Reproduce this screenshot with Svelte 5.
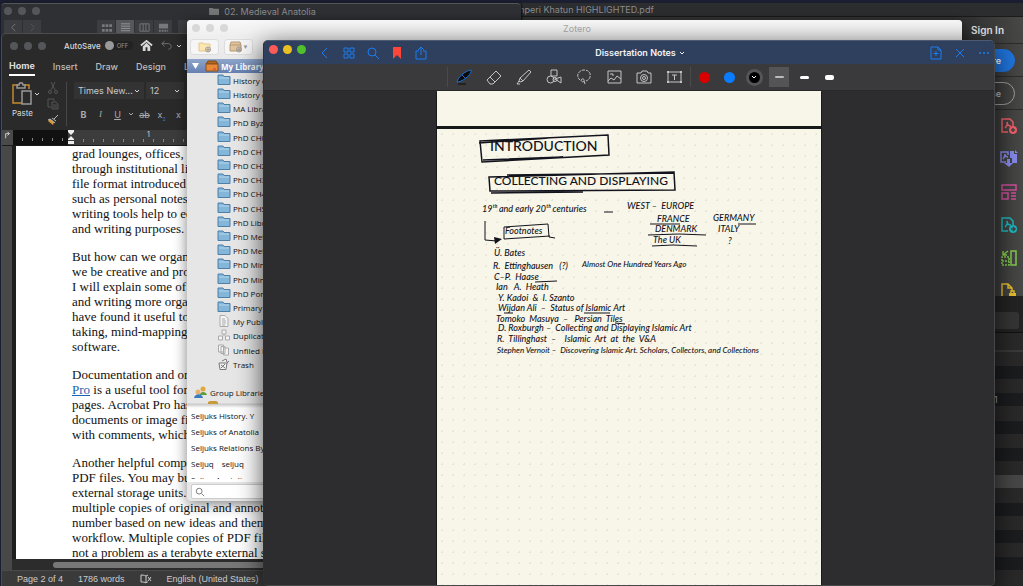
<script>
  const collections = [
    'History of Islamic Art', 'History of Seljuks', 'MA Library', 'PhD Byzantium',
    'PhD CH0', 'PhD CH1', 'PhD CH2', 'PhD CH3', 'PhD CH4', 'PhD CH5',
    'PhD Library', 'PhD Methods', 'PhD Metalwork', 'PhD Mina', 'PhD Mina', 'PhD Portraits', 'Primary Sources',
  ];

  const special = [
    { label: 'My Publications', icon: 'page' },
    { label: 'Duplicate Items', icon: 'boxes' },
    { label: 'Unfiled Items', icon: 'pages' },
    { label: 'Trash', icon: 'trash' },
  ];

  const tags = ['Seljuks History. Y', 'Seljuks of Anatolia', 'Seljuks Relations By'];

  const paragraphs = [
    ['grad lounges, offices, a', 'through institutional li', 'file format introduced', 'such as personal notes', 'writing tools help to ed', 'and writing purposes.'],
    ['But how can we organ', 'we be creative and pro', 'I will explain some of', 'and writing more orga', 'have found it useful to', 'taking, mind-mapping', 'software.'],
  ];

  const lastParagraphs = [
    ['Another helpful comp', 'PDF files. You may bu', 'external storage units.', 'multiple copies of original and annota', 'number based on new ideas and them', 'workflow. Multiple copies of PDF fil', 'not a problem as a terabyte external s'],
  ];

  const tools = ['pen', 'eraser', 'highlighter', 'shapes', 'lasso', 'image', 'camera', 'text'];

  // positions on the notebook page
  const notes = [
    { x: 53, y: 8, size: 'h1', text: 'INTRODUCTION' },
    { x: 57, y: 44, size: 'h2', text: 'COLLECTING AND DISPLAYING' },
    { x: 45, y: 75, size: 'md', text: '19ᵗʰ and early 20ᵗʰ centuries' },
    { x: 190, y: 72, size: 'md', text: 'WEST –  EUROPE' },
    { x: 220, y: 85, size: 'md', text: 'FRANCE' },
    { x: 276, y: 84, size: 'md', text: 'GERMANY' },
    { x: 218, y: 95, size: 'md', text: 'DENMARK' },
    { x: 281, y: 95, size: 'md', text: 'ITALY' },
    { x: 216, y: 106, size: 'md', text: 'The UK' },
    { x: 291, y: 107, size: 'md', text: '?' },
    { x: 68, y: 97, size: 'md', text: 'Footnotes' },
    { x: 57, y: 119, size: 'md', text: 'Ü. Bates' },
    { x: 56, y: 132, size: 'md', text: 'R.  Ettinghausen   (?)' },
    { x: 145, y: 130, size: 'sm', text: 'Almost One Hundred Years Ago' },
    { x: 57, y: 143, size: 'md', text: 'C–P.  Haase' },
    { x: 59, y: 153, size: 'md', text: 'Ian   A.  Heath' },
    { x: 61, y: 164, size: 'md', text: 'Y. Kadoi  &  I. Szanto' },
    { x: 61, y: 174, size: 'md', text: 'Wijdan Ali  –  Status of Islamic Art' },
    { x: 59, y: 185, size: 'md', text: 'Tomoko  Masuya  –   Persian  Tiles' },
    { x: 61, y: 194, size: 'md', text: 'D. Roxburgh –  Collecting and Displaying Islamic Art' },
    { x: 60, y: 205, size: 'md', text: 'R.  Tillinghast  –    Islamic  Art  at  the  V&A' },
    { x: 60, y: 216, size: 'sm', text: 'Stephen Vernoit –  Discovering Islamic Art. Scholars, Collectors, and Collections' },
  ];

  const fileRows = Array.from({ length: 17 }, (_, i) => i);
</script>

{#snippet chevron()}
  <svg class="chev" viewBox="0 0 8 8"><path d="M2 3l2 2 2-2" /></svg>
{/snippet}

<div class="desktop">
  <section class="acrobat">
    <header class="acro-title">Mahperi Khatun HIGHLIGHTED.pdf</header>
    <div class="acro-side">
      <a href="#signin" class="signin">Sign In</a>
      <div class="acro-cell"><button class="pill blue">Share</button></div>
      <div class="acro-cell"><button class="pill">Close</button></div>
      <nav class="acro-tools">
        <button aria-label="Create PDF" class="red">
          <svg viewBox="0 0 18 18"><path d="M8 15H2V2h8l3 3v4M5 11c2-2 3-4 2-6 0 3 2 4 4 4" /><circle cx="13" cy="13" r="4" class="solid" /><path class="cut" d="M13 11v4M11 13h4" /></svg>
        </button>
        <button aria-label="Combine files" class="violet">
          <svg viewBox="0 0 18 18"><path d="M6 12H1V2h7v3M3 9c2-2 2-3 2-5 0 2 1 3 3 3" /><path class="solid" d="M10 1h4v3h3v9h-5V8h-2zM15 0l3 3h-3zM7 9h3v4h3l-4 4-5-4h3z" /></svg>
        </button>
        <button aria-label="Organize pages" class="pink">
          <svg viewBox="0 0 18 18"><path d="M2 2h14v5H2zM2 10h6v6H2zM11 10h5M11 13h5M11 16h5" /></svg>
        </button>
        <button aria-label="Export PDF" class="teal">
          <svg viewBox="0 0 18 18"><path d="M8 15H2V2h8l3 3v4M5 11c2-2 3-4 2-6 0 3 2 4 4 4" /><circle cx="13" cy="13" r="4" class="solid" /><path class="cut" d="M11 13h4M13 11l2 2-2 2" /></svg>
        </button>
        <button aria-label="Edit pages" class="green">
          <svg viewBox="0 0 18 18"><path d="M11 2h5v14h-5z" /><path stroke-dasharray="2 1" d="M9 8H2v8h7V8M2 12h7" /><path d="M8 2L3 6M3 2v4h4" /></svg>
        </button>
        <button aria-label="Protect" class="yellow">
          <svg viewBox="0 0 18 18"><path d="M8 15H2V2h6l4 4v3M8 2v4h4" /><path class="solid" d="M9 11h7v6H9z" /><path d="M11 11V9h3v2" /></svg>
        </button>
      </nav>
    </div>
  </section>

  <section class="files">
    <div class="files-bar"><input type="search" aria-label="Search files" /></div>
    <div class="files-head"></div>
    <ul>
      {#each fileRows as row}
        <li class:selected={row === 9}>{row === 3 ? '1' : ''}</li>
      {/each}
    </ul>
  </section>

  <section class="finder">
    <header class="finder-title">
      <div class="lights"><i></i><i></i><i></i></div>
      <div class="finder-name">
        <svg viewBox="0 0 12 10"><path d="M0 1h4l1 1h6v7H0z" /></svg>
        02. Medieval Anatolia
      </div>
    </header>
    <div class="finder-tools">
      <div class="seg">
        <button aria-label="Back"><svg viewBox="0 0 12 12"><path d="M8 2L4 6l4 4" /></svg></button>
        <button aria-label="Forward" class="dim"><svg viewBox="0 0 12 12"><path d="M4 2l4 4-4 4" /></svg></button>
      </div>
      <div class="seg views">
        <button aria-label="Icons"><svg viewBox="0 0 12 12"><path stroke-width="3" stroke-dasharray="3 1" d="M1 4h11M1 9h11" /></svg></button>
        <button aria-label="List" class="on"><svg viewBox="0 0 12 12"><path d="M1 2h10M1 4.5h10M1 7h10M1 9.5h10" /></svg></button>
        <button aria-label="Columns"><svg viewBox="0 0 12 12"><path d="M1 2h10v8H1zM4.500 2v8M7.500 2v8" /></svg></button>
        <button aria-label="Gallery"><svg viewBox="0 0 12 12"><path stroke-width="5" d="M1 4.500h10" /><path stroke-width="2" stroke-dasharray="2 1" d="M1 9.500h10" /></svg></button>
      </div>
      <div class="seg views"><button aria-label="Group"></button></div>
    </div>
  </section>

  <section class="word">
    <header class="word-title">
      <div class="lights"><i></i><i></i><i></i></div>
      <label class="autosave">AutoSave <input type="checkbox" /><span class="toggle"><b></b>OFF</span></label>
      <button aria-label="Home page"><svg class="i14" viewBox="0 0 14 14"><path class="thick" d="M1 7l6-5 6 5" /><path class="fill" d="M3 8l4-4 4 4v5H8V9H6v4H3z" /></svg></button>
      <button aria-label="Undo" class="undo"><svg class="i14" viewBox="0 0 14 14"><path d="M5 2L2 5l3 3M2 5h7c4 0 4 6 0 6" /></svg></button>
      {@render chevron()}
    </header>
    <nav class="tabs">
      <button class="active">Home</button>
      <button>Insert</button>
      <button>Draw</button>
      <button>Design</button>
      <button>L</button>
    </nav>
    <div class="ribbon">
      <button class="paste">
        <span>
          <svg viewBox="0 0 20 24"><path class="board" d="M6 3H1v18h9M12 3h5v4" /><path class="clip" d="M5 6V3h2c0-3 4-3 4 0h2v3zM10 9h9v13h-9z" /></svg>
          {@render chevron()}
        </span>
        Paste
      </button>
      <div class="mini">
        <button aria-label="Cut"><svg class="dim" viewBox="0 0 12 12"><path d="M4 0l4 8M8 0L4 8" /><circle cx="3" cy="10" r="1.500" /><circle cx="9" cy="10" r="1.500" /></svg></button>
        <button aria-label="Copy"><svg class="dim" viewBox="0 0 12 12"><path d="M4 9H1V1h6v2M5 4h4l2 2v5H5zM6 7h4M6 9h4" /></svg></button>
        <button aria-label="Format painter"><svg viewBox="0 0 12 12"><path class="gold" d="M1 7l5 4 1-3-4-3z" /><path d="M3 5l5 4M5 4l4 3M7 5l4-4M1 6l2-1" /></svg></button>
      </div>
      <div class="fonts">
        <div class="row">
          <label class="select wide"><select aria-label="Font"><option>Times New...</option></select>{@render chevron()}</label>
          <label class="select"><select aria-label="Font size"><option>12</option></select>{@render chevron()}</label>
        </div>
        <div class="row styles">
          <button><b>B</b></button>
          <button class="ital"><i>I</i></button>
          <button><u>U</u></button>
          {@render chevron()}
          <button><s>ab</s></button>
          <button>x<sub>2</sub></button>
          <button>x</button>
        </div>
      </div>
    </div>
    <div class="ruler">
      <span class="tabstop"><svg viewBox="0 0 12 12"><path d="M4 9V4h4M6 2l2 2-2 2" /></svg></span>
      <span class="margin"></span>
      <svg class="marker" viewBox="0 0 6 14"><path d="M0 0h6v2L3 5 0 2zM3 6l3 3v1H0V9zM0 11h6v3H0z" /></svg>
      <span class="scale">1</span>
    </div>
    <div class="doc">
      <article>
        {#each paragraphs as lines}
          <p>{#each lines as line}{line}<br />{/each}</p>
        {/each}
        <p>
          Documentation and or<br /><a href="#pro">Pro</a> is a useful tool for<br />pages. Acrobat Pro has<br />documents or image fi<br />with comments, which
        </p>
        {#each lastParagraphs as lines}
          <p>{#each lines as line}{line}<br />{/each}</p>
        {/each}
      </article>
    </div>
    <div class="hscroll"><span></span></div>
    <footer class="status">
      <span>Page 2 of 4</span>
      <span>1786 words</span>
      <svg viewBox="0 0 12 10"><path d="M6 2v7M6 2C4 1 2 1 1 1v7c2 0 4 0 5 1 1-1 1-1 2-1M6 2l2-1M8 3l3 4M11 3L8 7" /></svg>
      <span>English (United States)</span>
    </footer>
  </section>

  <section class="zotero">
    <header class="zot-title">
      <div class="lights"><i></i><i></i><i></i></div>
      <span class="zot-name">Zotero</span>
    </header>
    <div class="zot-tools">
      <button aria-label="New collection"><svg viewBox="0 0 14 12"><path class="cream" d="M1 2h4l1 1h6v7H1z" /><circle cx="10" cy="8.500" r="2.500" /><path d="M10 7v3M8.500 8.500h3" /></svg></button>
      <button aria-label="New library"><svg viewBox="0 0 14 12"><path class="tan" d="M2 1h9l1 3v6H1V4zM1 4h11" /><circle cx="10" cy="8.500" r="2.500" /><path d="M10 7v3M8.500 8.500h3" /></svg><small>▼</small></button>
    </div>
    <ul class="tree">
      <li class="root">
        <svg class="twist" viewBox="0 0 14 12"><path d="M3 3h7l-3.500 6z" /></svg>
        <svg viewBox="0 0 14 12"><path class="lid" d="M3 1h8l2 3H1z" /><path class="crate" d="M1 4h12v7H1z" /><path class="dots" d="M8 9h3" /></svg>
        My Library
      </li>
      {#each collections as name}
        <li>
          <svg viewBox="0 0 14 12"><path class="folder" d="M1 2.500V1h5l1 1.500h6v8H1z" /><path class="shine" d="M2 4h10" /></svg>
          {name}
        </li>
      {/each}
      {#each special as item}
        <li>
          <svg viewBox="0 0 14 12" class="gray">
            {#if item.icon === 'page'}
              <path d="M3 .5h5l3 3v8H3zM5 4h3M5 6h4M5 8h4M5 10h3" />
            {:else if item.icon === 'boxes'}
              <path d="M5 1h4v4H5zM1.500 7h4v4h-4zM8.500 7h4v4h-4zM7 5v2" />
            {:else if item.icon === 'pages'}
              <path d="M1.500 1h5v7h-5zM4 2.500h4v7H4zM6.500 4h5v7h-5z" />
            {:else}
              <path class="dark" d="M2 5h8l-1 6.500H3zM5 3l4-2 1 3M4 7l4 3M8 6l-4 4M10 5l2-2" />
            {/if}
          </svg>
          {item.label}
        </li>
      {/each}
      <li></li>
      <li class="group">
        <svg viewBox="0 0 14 12" class="people"><circle cx="9" cy="3" r="2.500" fill="#e0a83c" /><path d="M6 9c0-4 6-4 7 0z" fill="#5a9c3c" /><circle cx="4" cy="6" r="2.500" fill="#e9b070" /><path d="M0 12c1-5 8-5 9 0z" fill="#3a7ac0" /></svg>
        Group Libraries
      </li>
    </ul>
    <div class="splitter"><svg viewBox="0 0 14 4"><path d="M2 4V2l2-1h6l2 1v2z" /></svg></div>
    <ul class="tags">
      {#each tags as tag}
        <li>{tag}</li>
      {/each}
      <li><span>Seljuq</span><span>seljuq</span></li>
      <li class="cut-off">Seljuq Anatolia</li>
    </ul>
    <label class="zot-search">
      <svg viewBox="0 0 12 12"><circle cx="5" cy="5" r="3.500" /><path d="M8 8l3 3" /></svg>
      <input type="text" aria-label="Filter tags" />
    </label>
  </section>

  <section class="notes">
    <header class="notes-title">
      <div class="bar-left">
        <div class="lights color"><i></i><i></i><i></i></div>
        <button aria-label="Back"><svg viewBox="0 0 16 16"><path d="M10 3L5 8l5 5" /></svg></button>
        <button aria-label="Thumbnails"><svg viewBox="0 0 16 16"><path d="M3 3h4v4H3zM9 3h4v4H9zM3 9h4v4H3zM9 9h4v4H9z" /></svg></button>
        <button aria-label="Search"><svg viewBox="0 0 16 16"><circle cx="7" cy="7" r="4" /><path d="M10 10l4 4" /></svg></button>
        <button aria-label="Bookmark"><svg viewBox="0 0 16 16"><path class="mark" d="M4 2h8v12l-4-4-4 4z" /></svg></button>
        <button aria-label="Share"><svg viewBox="0 0 16 16"><path d="M6 6H3v8h10V6h-3M8 10V2M5 5l3-3 3 3" /></svg></button>
      </div>
      <h1>Dissertation Notes {@render chevron()}</h1>
      <div class="bar-right">
        <button aria-label="Add page"><svg viewBox="0 0 16 16"><path d="M3 2h7l3 3v9H3zM10 2v3h3M8 6v5M5.500 8.500h5" /></svg></button>
        <button aria-label="Close"><svg viewBox="0 0 16 16"><path d="M4 4l8 8M12 4l-8 8" /></svg></button>
        <button aria-label="More"><svg viewBox="0 0 16 16"><path class="dots3" d="M4 8h0M8 8h0M12 8h0" /></svg></button>
      </div>
    </header>
    <div class="notes-tools">
      <span class="rule"></span>
      {#each tools as tool}
        <button class="tool" aria-label={tool}>
          <svg viewBox="0 0 16 16">
            {#if tool === 'pen'}
              <path class="ink" d="M1 13C2 8 9 2 15 1c1 3-5 10-13 12z" /><path class="nib" d="M4 11l8-8M2 15h8" /><path class="ring" d="M6 6l3 3" />
            {:else if tool === 'eraser'}
              <path d="M1 11l9-9 5 5-8 8H4zM4 8l5 5" />
            {:else if tool === 'highlighter'}
              <path d="M4 9l9-8 2 2-8 9zM4 9l-1 3 1 1 3-1M3 12l-2 3h3" />
            {:else if tool === 'shapes'}
              <path d="M5 1h6v6H5zM9 10l6-2v6z" /><circle cx="4.500" cy="10.500" r="3.500" /><circle cx="9" cy="10.500" r="2" />
            {:else if tool === 'lasso'}
              <path stroke-dasharray="3 1" d="M4 11C-1 7 3 1 8 1c8 0 8 9 2 11" /><path d="M5 11c1-2 4-1 3 1s-3 0-3-1M8 12l1 3" />
            {:else if tool === 'image'}
              <path d="M2 2h13v12H2zM2 12l3-3 3 2 3-4 4 3M4 5h3v2" />
            {:else if tool === 'camera'}
              <path d="M1 4h4l1-2h5l1 2h3v10H1z" /><circle cx="8" cy="9" r="3.500" /><circle cx="8" cy="9" r="1.500" />
            {:else}
              <path d="M2 3h13v10H2zM6 6h5M8.500 6v5" /><path class="knobs" d="M2 3h0M15 3h0M2 13h0M15 13h0" />
            {/if}
          </svg>
        </button>
      {/each}
      <span class="rule"></span>
      <button class="swatch" aria-label="Red"><i class="c-red"></i></button>
      <button class="swatch" aria-label="Blue"><i class="c-blue"></i></button>
      <button class="swatch" aria-label="Black"><i class="c-black">{@render chevron()}</i></button>
      <button class="swatch on" aria-label="Thin"><i class="line thin"></i></button>
      <button class="swatch" aria-label="Medium"><i class="line"></i></button>
      <button class="swatch" aria-label="Thick"><i class="line fat"></i></button>
    </div>
    <div class="canvas">
      <div class="sheet prev"></div>
      <div class="sheet">
        {#each notes as note}
          <span class="note {note.size}" style="left: {note.x}px; top: {note.y}px">{note.text}</span>
        {/each}
        <svg class="strokes" viewBox="0 0 384 457">
          <path class="heavy" d="M43 12L171 6l1 20L45 33zM42 14l70-5M46 31l80-3" />
          <path class="heavy" d="M52 48l185-5 1 18-185 1zM54 64l92-1M70 46l167-2" />
          <path d="M67 98l44-3 1 13 6 1M67 98v12l46-3" />
          <path d="M48 92v19l12 1M167 83h9" />
          <path class="fill" d="M57 108l8 2-7 5z" />
          <path d="M213 95h30M211 106l31-1 27 1M215 117l21-1 24 1M301 95h18M98 153l22-1M67 184h9M147 184h26M178 194l10 1" />
        </svg>
      </div>
    </div>
  </section>
</div>

<style>
  :global(body) { margin: 0; background: #1a1c2c; }
  .desktop {
    position: relative; height: 100vh; overflow: hidden;
    background: #1b1e30; color: #d8d8d8;
    font-family: Inter, "Liberation Sans", sans-serif; font-size: 9px;
  }
  section { position: absolute; box-sizing: border-box; overflow: hidden; display: flex; flex-direction: column; }
  button { border: 0; padding: 0; margin: 0; background: none; color: inherit; font: inherit; }
  ul { list-style: none; margin: 0; padding: 0; }
  svg { display: block; fill: none; stroke: currentColor; stroke-width: 1; }
  .chev { width: 8px; height: 8px; flex-shrink: 0; }
  .lights { display: flex; gap: 6px; }
  .lights i { width: 8px; height: 8px; border-radius: 50%; background: #55565a; }

  /* acrobat */
  .acrobat { left: 4px; right: 0; top: 3px; bottom: 0; background: #3e3e3e; }
  .acro-title {
    height: 13px; line-height: 13px; padding-left: 502px; background: #2c2d2f;
    color: #8b8c8e; border-bottom: 1px solid #1b1b1b; white-space: nowrap;
  }
  .acro-side { flex: 1; display: flex; flex-direction: column; background: linear-gradient(90deg, #333 95%, #484847); }
  .signin {
    height: 26px; line-height: 26px; padding-right: 19px; text-align: right; font-size: 10px; font-weight: 600;
    color: #e4e4e4; text-decoration: none; border-bottom: 1px solid #2c2c2c;
  }
  .acro-cell { height: 32px; display: flex; align-items: center; justify-content: flex-end; padding-right: 8px; border-bottom: 1px solid #2c2c2c; }
  .pill { height: 23px; width: 64px; padding-right: 13px; text-align: right; border: 1px solid #a0a0a0; border-radius: 12px; color: #bbb; font-weight: 600; box-sizing: border-box; }
  .pill.blue { background: #1f74dc; border-color: #1f74dc; color: #fff; }
  .acro-tools { display: flex; flex-direction: column; align-items: flex-end; gap: 15px; padding: 7px 5px 0 0; }
  .acro-tools button, .acro-tools svg { width: 18px; height: 18px; }
  .acro-tools svg { stroke-width: 1.500; }
  .solid { fill: currentColor; stroke: none; }
  .cut { stroke: #444; }
  .red { color: #ee5f68; } .violet { color: #8688ea; } .pink { color: #cf4f9c; }
  .teal { color: #1fb5bd; } .green { color: #82cc4c; } .yellow { color: #e5bd2c; }

  /* file list behind the notes window */
  .files { right: 0; top: 296px; bottom: 0; width: 240px; background: #292929; }
  .files-bar { height: 37px; padding: 16px 4px 0; box-sizing: border-box; background: #232324; border-bottom: 1px solid #111; }
  .files-bar input { width: 100%; height: 17px; box-sizing: border-box; border: 0; border-radius: 3px; background: #353536; }
  .files-head { height: 17px; border-bottom: 2px solid #3a3a3a; }
  .files li { height: 13px; line-height: 13px; margin-bottom: 1px; padding-left: 211px; color: #aaa; }
  .files li:nth-child(3n) { margin-bottom: 0; }
  .files li:nth-child(even) { background: #1b1c1e; }
  .files li.selected { background: #474747; }

  /* finder */
  .finder { left: 1px; top: 3px; width: 520px; height: 90px; background: #2e3034; border-top: 1px solid #55565a; border-radius: 4px 4px 0 0; box-shadow: 1px 0 2px #111; }
  .finder-title { display: grid; grid-template-columns: 1fr auto 1fr; align-items: center; height: 14px; padding-left: 3px; }
  .finder-name { display: flex; align-items: center; gap: 4px; color: #8c8d90; }
  .finder-name svg { width: 11px; height: 9px; fill: #777; stroke: none; }
  .finder-tools { display: flex; padding: 2px 3px; gap: 6px; color: #77787b; }
  .seg { display: flex; gap: 1px; }
  .seg button { width: 18px; height: 15px; display: grid; place-items: center; background: #3b3d40; }
  .seg svg { width: 11px; height: 11px; }
  .seg .on { background: #55575b; color: #999; }
  .seg .dim { color: #55565a; }
  .seg.views:nth-child(2) { margin-left: 50px; }

  /* word */
  .word { left: 1px; top: 33px; bottom: 0; width: 420px; background: #2a2a2a; border: 1px solid #4c4c4c; border-bottom: 0; border-radius: 5px 5px 0 0; }
  .word-title { display: flex; align-items: center; height: 23px; padding-left: 8px; flex-shrink: 0; font-size: 8px; font-weight: 500; }
  .autosave { display: flex; align-items: center; gap: 4px; margin: 0 7px 0 18px; }
  .autosave input { position: absolute; opacity: 0; }
  .toggle { display: flex; align-items: center; gap: 3px; width: 28px; height: 9px; border-radius: 5px; background: #222; color: #888; font-size: 6px; }
  .toggle b { width: 9px; height: 9px; border-radius: 50%; background: #999; }
  .i14 { width: 13px; height: 13px; }
  .thick { stroke-width: 2; }
  .fill { fill: currentColor; stroke: none; }
  .undo { margin: 0 2px 0 7px; color: #777; }
  .tabs { display: flex; gap: 18px; height: 20px; padding-left: 7px; flex-shrink: 0; align-items: flex-start; color: #bdbdbd; font-weight: 500; }
  .tabs button { height: 19px; box-sizing: border-box; }
  .tabs .active { font-weight: 700; color: #ddd; border-bottom: 2px solid #fff; }
  .ribbon { display: flex; height: 53px; padding-top: 5px; box-sizing: border-box; flex-shrink: 0; }
  .paste { display: flex; flex-direction: column; align-items: flex-start; width: 38px; padding-left: 10px; font-size: 8px; box-sizing: border-box; gap: 2px; }
  .paste span { display: flex; align-items: center; gap: 1px; }
  .paste > span > svg:first-child { width: 20px; height: 24px; flex-shrink: 0; stroke-width: 1.500; }
  .board { stroke: #c58a2c; }
  .clip { stroke: #999; fill: #2a2a2a; }
  .mini { display: flex; flex-direction: column; gap: 4px; width: 26px; align-items: center; border-right: 1px solid #484848; height: 44px; }
  .mini svg { width: 12px; height: 12px; color: #bbb; }
  .mini .dim { color: #555; }
  .gold { fill: #d79a34; stroke: none; }
  .fonts { padding-left: 7px; }
  .row { display: flex; gap: 2px; align-items: center; }
  .select { display: flex; align-items: center; width: 38px; height: 17px; background: #333; box-sizing: border-box; padding: 0 3px 0 4px; }
  .select.wide { width: 70px; }
  .select select { flex: 1; min-width: 0; appearance: none; border: 0; padding: 0; background: none; color: #c8c8c8; font: inherit; }
  .styles { padding: 7px 0 0 2px; color: #aaa; }
  .styles button { width: 15px; height: 16px; font-size: 9px; white-space: nowrap; }
  .styles .ital { font-family: "Liberation Serif", serif; }
  .styles sub { font-size: 5px; line-height: 0; color: #3a7ac4; }
  .ruler { display: flex; height: 15px; flex-shrink: 0; background: #3c3c3c; border-bottom: 1px solid #1b1b1b; }
  .tabstop { width: 11px; background: #4a4a4a; }
  .tabstop svg { width: 11px; height: 11px; }
  .margin { width: 55px; background: repeating-linear-gradient(90deg, transparent 0 9px, #888 9px 10px) 0 8px / 100% 3px no-repeat #111; }
  .marker { width: 6px; height: 14px; fill: #eee; stroke: none; }
  .scale { flex: 1; padding-left: 73px; font-size: 7px; background: repeating-linear-gradient(90deg, transparent 0 9px, #888 9px 10px) 0 9px / 100% 3px no-repeat; }
  .doc { flex: 1; min-height: 0; overflow: hidden; background: linear-gradient(90deg, #484848 10px, #1e1e1e 10px 14px, transparent 14px); padding-left: 14px; }
  article { height: 100%; box-sizing: border-box; padding-left: 56px; background: #fff; color: #111; font: 13px/15px "Liberation Serif", serif; white-space: nowrap; overflow: hidden; }
  article p { margin: 0 0 13px; }
  article a { color: #1d62b0; }
  .hscroll { height: 11px; flex-shrink: 0; padding: 3px 0 0 51px; box-sizing: border-box; background: linear-gradient(90deg, #484848 10px, #2c2c2c 10px); }
  .hscroll span { display: block; height: 6px; border-radius: 3px; background: #777; }
  .status { display: flex; align-items: center; gap: 15px; height: 16px; padding-left: 15px; flex-shrink: 0; background: #3a3a3b; color: #ccc; border-top: 1px solid #4a4a4a; box-sizing: border-box; font-family: "Liberation Sans", sans-serif; }
  .status svg { width: 12px; height: 10px; }

  /* zotero */
  .zotero { left: 187px; right: 61px; top: 20px; background: #e6e6e6; border-radius: 4px; color: #111; box-shadow: 0 3px 14px rgba(0, 0, 0, 0.5); font-family: "Open Sans", "Noto Sans", sans-serif; font-size: 8px; }
  .zot-title { display: grid; grid-template-columns: 1fr auto 1fr; align-items: center; height: 16px; padding-left: 5px; background: linear-gradient(#f8f8f8, #efefef); color: #aaa; }
  .zot-title .lights i { background: #d8d8d8; }
  .zot-name { font-family: Inter, sans-serif; font-size: 9px; }
  .zot-tools { display: flex; gap: 5px; padding: 3px 3px 4px; background: linear-gradient(#efefef, #e9e9e9); }
  .zot-tools button { display: flex; align-items: center; justify-content: center; height: 16px; width: 29px; border: 1px solid #ddd; border-radius: 3px; background: #f6f6f6; box-sizing: border-box; color: #999; }
  .zot-tools svg { width: 14px; height: 12px; }
  .zot-tools small { font-size: 6px; }
  .cream { fill: #fbe6b4; stroke: #e4c98c; }
  .tan { fill: #e2c49c; stroke: #b59a7a; }
  .tree li { display: flex; align-items: center; gap: 2px; height: 14px; padding-left: 30px; white-space: nowrap; font-weight: 500; }
  .tree li:nth-child(5n) { margin-bottom: 1px; }
  .tree svg { width: 14px; height: 12px; flex-shrink: 0; }
  .tree .root { padding-left: 2px; gap: 2px; background: linear-gradient(#8fa5cb, #6680b2); color: #fff; font-weight: 700; }
  .twist { fill: #fff; stroke: none; }
  .lid { fill: #b56b20; stroke: #7c4a18; } .crate { fill: #e8893a; stroke: #8c4f1a; } .dots { stroke: #d33; }
  .folder { fill: #84b6d9; stroke: #4d7fa8; }
  .shine { stroke: #b6d6ea; }
  .gray { color: #aaa; fill: #f4f4f4; }
  .dark { stroke: #777; }
  .people { stroke: none; }
  .tree .group { padding-left: 7px; }
  .splitter { height: 8px; margin-top: 1px; padding-left: 19px; background: linear-gradient(#e6e6e6 3px, #c8c8c8 4px, #fff); }
  .splitter svg { width: 14px; height: 4px; fill: #c79a3a; stroke: none; }
  .tags { background: #fff; padding: 0 4px 3px; }
  .tags li { display: flex; gap: 8px; height: 16px; line-height: 16px; white-space: nowrap; }
  .tags .cut-off { height: 7px; overflow: hidden; }
  .zot-search { display: flex; align-items: center; height: 15px; margin: 2px 4px; padding-left: 3px; background: #fff; border: 1px solid #ccc; border-radius: 2px; box-sizing: border-box; }
  .zot-search svg { width: 10px; height: 10px; color: #666; }
  .zot-search input { flex: 1; border: 0; padding: 0; height: 11px; background: none; }

  /* notebook */
  .notes { left: 263px; right: 28px; top: 40px; bottom: 0; background: #2d2d2f; border: 1px solid #4d5666; border-color: #4d5a70 #47474a #47474a #303033; border-radius: 5px; box-shadow: 0 6px 26px rgba(0, 0, 0, 0.7); }
  .notes-title { display: grid; grid-template-columns: 1fr auto 1fr; align-items: center; height: 23px; padding: 0 2px 0 5px; flex-shrink: 0; background: #2f405f; color: #1a7cf0; }
  .bar-left, .bar-right { display: flex; gap: 8px; }
  .bar-left { align-items: center; }
  .bar-right { justify-content: flex-end; }
  .notes-title button, .notes-title button svg { width: 16px; height: 16px; }
  .color { margin-right: 3px; gap: 5px; align-self: flex-start; }
  .color i { width: 9px; height: 9px; background: #fc5b57; }
  .color i:nth-child(2) { background: #e9bf22; }
  .color i:nth-child(3) { background: #52c02b; }
  .mark { fill: #fe453a; stroke: none; }
  .dots3 { stroke-width: 2; stroke-linecap: round; }
  h1 { display: flex; align-items: center; gap: 2px; margin: 0; padding-left: 20px; font-size: 9px; font-weight: 600; color: #f2f3f5; white-space: nowrap; }
  .notes-tools { display: flex; align-items: center; justify-content: center; height: 27px; padding-left: 29px; flex-shrink: 0; background: #3a3a3c; border-bottom: 1px solid #29292b; box-sizing: border-box; color: #c4c4c6; }
  .rule { width: 1px; height: 20px; background: #4a4a4c; margin: 0 1px; }
  .tool { width: 30px; display: grid; place-items: center; }
  .tool svg { width: 16px; height: 16px; }
  .ink { fill: #0a0a0a; stroke: #1d6fd0; }
  .nib { stroke: #0a0a0a; }
  .ring { stroke: #1d6fd0; }
  .knobs { stroke-width: 2; stroke-linecap: square; }
  .swatch { width: 25px; height: 20px; display: grid; place-items: center; }
  .swatch.on { background: linear-gradient(#545457, #545457) center / 20px 20px no-repeat; }
  .swatch i { display: grid; place-items: center; width: 11px; height: 11px; border-radius: 50%; }
  .c-red { background: #d80000; } .c-blue { background: #0a7cff; }
  .swatch .c-black { background: #000; box-shadow: 0 0 0 3px #555558; color: #fff; }
  .swatch .line { width: 9px; height: 3px; border-radius: 2px; background: #fff; }
  .swatch .thin { height: 2px; background: #bbb; }
  .swatch .fat { height: 5px; }
  .canvas { flex: 1; min-height: 0; display: flex; flex-direction: column; align-items: center; gap: 3px; background: #2d2d2f; }
  .sheet { position: relative; flex: 1; width: 384px; background: radial-gradient(circle, #e6e4d6 0 1px, transparent 1px) 0 0 / 11px 11px #f8f6e8; color: #12131c; box-shadow: 0 0 0 1px #18191b; }
  .sheet.prev { flex: 0 0 35px; background: #f8f6e8; box-shadow: 0 2px 0 1px #18191b; }
  .note { position: absolute; white-space: pre; font-family: Lato, sans-serif; font-style: italic; font-weight: 500; line-height: 10px; }
  .note.h1 { font-size: 14px; line-height: 18px; font-style: normal; }
  .note.h2 { font-size: 12px; line-height: 16px; font-style: normal; }
  .note.md { font-size: 9px; }
  .note.sm { font-size: 8px; }
  .strokes { position: absolute; inset: 0; width: 384px; height: 457px; }
  .heavy { stroke-width: 1.500; }
</style>
